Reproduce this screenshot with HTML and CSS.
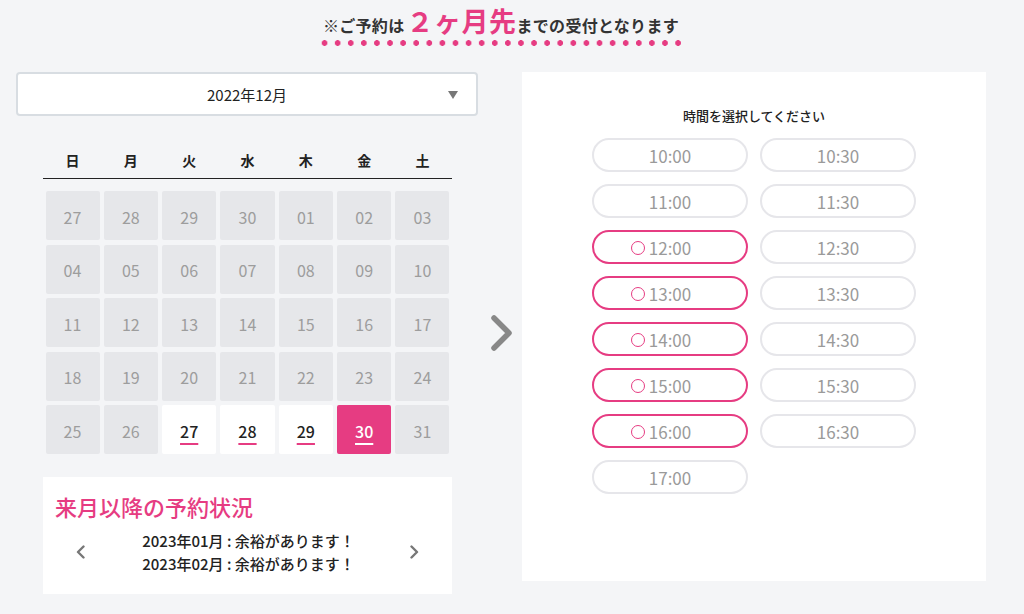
FILE: index.html
```html
<!DOCTYPE html>
<html lang="ja">
<head>
<meta charset="utf-8">
<link rel="stylesheet" href="styles.css">
</head>
<body>
<header class="header">
  <p class="notice">※ご予約は<span class="notice-em">２ヶ月先</span>までの受付となります</p>
  <div class="dots"></div>
</header>
<main class="main">
  <section class="left">
    <div class="select"><span>2022年12月</span><span class="select-caret"></span></div>
    <div class="calendar">
      <div class="weekdays">
        <span>日</span><span>月</span><span>火</span><span>水</span><span>木</span><span>金</span><span>土</span>
      </div>
      <div class="days">
        <div class="day">27</div><div class="day">28</div><div class="day">29</div><div class="day">30</div><div class="day">01</div><div class="day">02</div><div class="day">03</div>
        <div class="day">04</div><div class="day">05</div><div class="day">06</div><div class="day">07</div><div class="day">08</div><div class="day">09</div><div class="day">10</div>
        <div class="day">11</div><div class="day">12</div><div class="day">13</div><div class="day">14</div><div class="day">15</div><div class="day">16</div><div class="day">17</div>
        <div class="day">18</div><div class="day">19</div><div class="day">20</div><div class="day">21</div><div class="day">22</div><div class="day">23</div><div class="day">24</div>
        <div class="day">25</div><div class="day">26</div><div class="day open"><span>27</span></div><div class="day open"><span>28</span></div><div class="day open"><span>29</span></div><div class="day open selected"><span>30</span></div><div class="day">31</div>
      </div>
    </div>
    <div class="future">
      <h2 class="future-title">来月以降の予約状況</h2>
      <div class="future-row">
        <svg class="chev" width="9" height="14" viewBox="0 0 9 14"><polyline points="7.5,1.5 2,7 7.5,12.5" fill="none" stroke="#777" stroke-width="2.4" stroke-linecap="round" stroke-linejoin="round"/></svg>
        <div class="future-text">
          <p>2023年01月 : 余裕があります！</p>
          <p>2023年02月 : 余裕があります！</p>
        </div>
        <svg class="chev" width="9" height="14" viewBox="0 0 9 14"><polyline points="1.5,1.5 7,7 1.5,12.5" fill="none" stroke="#777" stroke-width="2.4" stroke-linecap="round" stroke-linejoin="round"/></svg>
      </div>
    </div>
  </section>
  <div class="arrow">
    <svg width="26" height="38" viewBox="0 0 26 38"><polyline points="6,4 21,19 6,34" fill="none" stroke="#888" stroke-width="5.5" stroke-linecap="round" stroke-linejoin="round"/></svg>
  </div>
  <section class="right">
    <p class="right-title">時間を選択してください</p>
    <div class="times">
      <div class="time"><span>10:00</span></div>
      <div class="time"><span>10:30</span></div>
      <div class="time"><span>11:00</span></div>
      <div class="time"><span>11:30</span></div>
      <div class="time avail"><span>12:00</span></div>
      <div class="time"><span>12:30</span></div>
      <div class="time avail"><span>13:00</span></div>
      <div class="time"><span>13:30</span></div>
      <div class="time avail"><span>14:00</span></div>
      <div class="time"><span>14:30</span></div>
      <div class="time avail"><span>15:00</span></div>
      <div class="time"><span>15:30</span></div>
      <div class="time avail"><span>16:00</span></div>
      <div class="time"><span>16:30</span></div>
      <div class="time"><span>17:00</span></div>
    </div>
  </section>
</main>
</body>
</html>
```

FILE: styles.css
```css
* { box-sizing: border-box; }
html, body { margin: 0; padding: 0; }
body {
  background: #f4f5f7;
  font-family: "Noto Sans CJK JP", "Noto Sans", sans-serif;
  color: #222;
  width: 1024px;
  height: 614px;
  overflow: hidden;
}
p, h2 { margin: 0; }

.header {
  height: 72px;
  display: flex;
  flex-direction: column;
  align-items: center;
  padding: 4px 38px 0 16px;
}
.notice {
  font-size: 16px;
  font-weight: 700;
  color: #333;
  line-height: 34px;
  height: 34px;
  letter-spacing: 0.3px;
}
.notice-em {
  font-size: 27px;
  color: #e63c82;
  letter-spacing: 0.5px;
  margin-left: 2px;
}
.dots {
  margin-top: 2px;
  width: 367px;
  height: 6px;
  background-image: radial-gradient(circle at center, #e63c82 2.6px, transparent 3.1px);
  background-size: 13.1px 6px;
  background-repeat: repeat-x;
}

.main {
  display: flex;
  padding: 0 38px 0 16px;
  align-items: flex-start;
}
.left { width: 462px; }
.arrow {
  width: 44px;
  align-self: center;
  display: flex;
  justify-content: center;
  padding-left: 1px;
}
.right {
  width: 464px;
  height: 509px;
  background: #fff;
  padding-top: 35px;
}

.select {
  position: relative;
  height: 44px;
  border: 2px solid #d8dde2;
  border-radius: 4px;
  background: #fff;
  display: flex;
  align-items: center;
  justify-content: center;
  font-size: 15px;
  color: #222;
}
.select-caret {
  position: absolute;
  right: 18px;
  top: 17px;
  width: 0;
  height: 0;
  border-left: 5.5px solid transparent;
  border-right: 5.5px solid transparent;
  border-top: 8px solid #777;
}

.calendar { margin: 0 26px 0 27px; }
.weekdays {
  margin-top: 34px;
  display: grid;
  grid-template-columns: repeat(7, 1fr);
  column-gap: 4.33px;
  padding: 0 2.5px 8px;
  border-bottom: 1px solid #222;
  font-size: 14px;
  font-weight: 700;
  line-height: 20px;
  text-align: center;
}
.days {
  margin-top: 12px;
  display: grid;
  grid-template-columns: repeat(7, 1fr);
  grid-auto-rows: 49px;
  column-gap: 4.33px;
  row-gap: 4.6px;
  padding: 0 2.5px;
}
.day {
  background: #e6e7ea;
  border-radius: 2px;
  display: flex;
  align-items: center;
  justify-content: center;
  font-size: 16px;
  color: #9d9d9d;
  padding-top: 2px;
}
.day.open {
  background: #fff;
  color: #222;
  font-weight: 500;
}
.day.open span {
  text-decoration: underline;
  text-decoration-color: #e63c82;
  text-decoration-thickness: 2px;
  text-underline-offset: 5px;
}
.day.selected {
  background: #e63c82;
  color: #fff;
}
.day.selected span { text-decoration-color: #fff; }

.future {
  margin: 23px 26px 0 27px;
  height: 117px;
  background: #fff;
  padding: 14px 12px 0;
}
.future-title {
  font-size: 22px;
  font-weight: 500;
  color: #e63c82;
  line-height: 30px;
}
.future-row {
  margin-top: 8px;
  display: flex;
  align-items: center;
  padding: 0 21px 0 21px;
}
.chev { flex: none; display: block; }
.future-text {
  flex: 1;
  text-align: center;
  font-size: 15px;
  font-weight: 500;
  line-height: 23px;
  color: #222;
  padding-left: 2px;
}

.right-title {
  text-align: center;
  font-size: 13px;
  font-weight: 500;
  line-height: 18px;
  color: #222;
}
.times {
  margin-top: 13px;
  display: grid;
  grid-template-columns: 156px 156px;
  grid-auto-rows: 34px;
  column-gap: 12px;
  row-gap: 12px;
  justify-content: center;
}
.time {
  border: 2px solid #e6e6ea;
  border-radius: 17px;
  display: flex;
  align-items: center;
  justify-content: center;
  font-size: 17px;
  color: #9a9a9a;
  padding-top: 1px;
}
.time span { position: relative; }
.time.avail { border-color: #e63c82; }
.time.avail span::before {
  content: "";
  position: absolute;
  left: -18px;
  top: 50%;
  width: 12px;
  height: 12px;
  margin-top: -7px;
  border: 1.5px solid #e63c82;
  border-radius: 50%;
}
```
